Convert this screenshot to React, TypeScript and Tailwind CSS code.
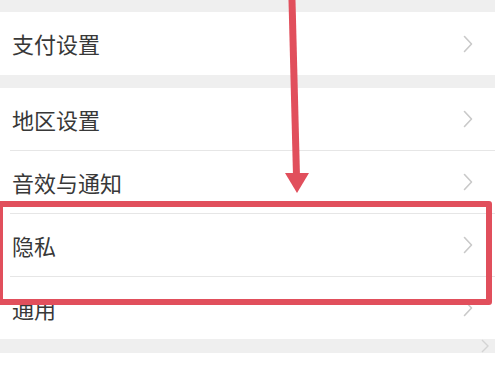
const rows1 = ["支付设置"];
const rows2 = ["地区设置", "音效与通知", "隐私", "通用"];

function Chevron() {
  return (
    <svg width="10" height="18" viewBox="0 0 10 18" fill="none" className="shrink-0">
      <path d="M1.5 1.5 L8.5 9 L1.5 16.5" stroke="#c9c9c9" strokeWidth="1.6" strokeLinecap="round" strokeLinejoin="round" />
    </svg>
  );
}

function Row({ label, divider }: { label: string; divider?: boolean }) {
  return (
    <div className="bg-white">
      <div className="flex h-[62px] items-center justify-between pl-3 pr-[22px]">
        <span className="text-[22px] text-[#383838]">{label}</span>
        <Chevron />
      </div>
      {divider ? <div className="ml-[10px] h-px bg-[#e6e6e6]" /> : null}
    </div>
  );
}

export default function App() {
  return (
    <div
      className="relative h-[368px] w-[495px] overflow-hidden bg-white"
      style={{ fontFamily: '"Noto Sans CJK SC", "Noto Sans", sans-serif' }}
    >
      <div className="h-3 bg-[#efefef]" />
      <div className="bg-white">
        <div className="flex h-[63px] items-center justify-between pl-3 pr-[22px]">
          <span className="text-[22px] text-[#383838]">{rows1[0]}</span>
          <Chevron />
        </div>
      </div>
      <div className="h-[13px] bg-[#efefef]" />
      {rows2.map((label, i) => (
        <Row key={label} label={label} divider={i < rows2.length - 1} />
      ))}
      <div className="flex h-[14px] items-center justify-end bg-[#efefef] pr-[6px]">
        <svg width="8" height="14" viewBox="0 0 8 14" fill="none">
          <path d="M1 1 L7 7 L1 13" stroke="#d4d4d4" strokeWidth="1.4" />
        </svg>
      </div>
      <div className="h-4 bg-white" />

      {/* red annotations */}
      <svg className="pointer-events-none absolute left-0 top-0" width="495" height="368">
        <line x1="292" y1="0" x2="296.5" y2="176" stroke="#e14f5c" strokeWidth="7" />
        <polygon points="285,173 309,173 297,193" fill="#e14f5c" />
      </svg>
      <div className="pointer-events-none absolute left-[-3px] top-[201px] h-[104px] w-[495px] rounded-[3px] border-[6px] border-[#e14f5c]" />
    </div>
  );
}
